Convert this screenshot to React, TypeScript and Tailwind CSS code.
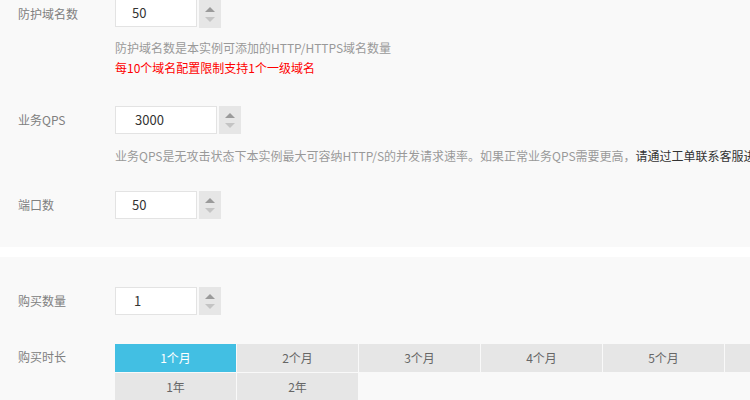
import React from "react";

const font = { fontFamily: '"Noto Sans CJK SC", "Noto Sans", sans-serif' };

function Spinner() {
  return (
    <div className="ml-[2px] flex h-[28px] w-[22px] shrink-0 flex-col items-center justify-center gap-[5px] bg-[#e6e6e6]">
      <div className="h-0 w-0 border-x-[5px] border-b-[5px] border-x-transparent border-b-[#9a9a9a]" />
      <div className="h-0 w-0 border-x-[5px] border-t-[5px] border-x-transparent border-t-[#c4c4c4]" />
    </div>
  );
}

function NumInput({ value, wide, first, pad }: { value: string; wide?: boolean; first?: boolean; pad: string }) {
  return (
    <div className="flex items-start">
      <div
        className={`${wide ? "w-[102px]" : "w-[82px]"} ${first ? "h-[27px] border-t-0" : "h-[28px]"} flex shrink-0 items-center border border-[#e3e3e3] bg-white text-[13px] text-[#333] ${pad}`}
      >
        {value}
      </div>
      <Spinner />
    </div>
  );
}

function Row({ label, children }: { label: string; children: React.ReactNode }) {
  return (
    <div className="flex items-center">
      <div className="w-[115px] shrink-0 pl-[18px] text-[12px] text-[#808080]">{label}</div>
      {children}
    </div>
  );
}

const months = ["1个月", "2个月", "3个月", "4个月", "5个月", "6个月", "7个月", "8个月", "9个月"];
const years = ["1年", "2年"];

export default function App() {
  return (
    <div className="h-[400px] w-[750px] overflow-hidden bg-white" style={font}>
      <div className="h-[247px] bg-[#f9f9f9]">
        <Row label="防护域名数">
          <NumInput value="50" first pad="pl-[16px]" />
        </Row>
        <div className="mt-[10px] pl-[115px] text-[12px] leading-[20px]">
          <div className="text-[#999]">防护域名数是本实例可添加的HTTP/HTTPS域名数量</div>
          <div className="text-[#ff0000]">每10个域名配置限制支持1个一级域名</div>
        </div>
        <div className="mt-[28px]">
          <Row label="业务QPS">
            <NumInput value="3000" wide pad="pl-[19px]" />
          </Row>
        </div>
        <div className="mt-[12px] whitespace-nowrap pl-[115px] text-[12px] leading-[20px] text-[#999]">
          业务QPS是无攻击状态下本实例最大可容纳HTTP/S的并发请求速率。如果正常业务QPS需要更高，
          <span className="text-[#333]">请通过工单联系客服进行调整</span>
        </div>
        <div className="mt-[25px]">
          <Row label="端口数">
            <NumInput value="50" pad="pl-[16px]" />
          </Row>
        </div>
      </div>
      <div className="h-[10px] bg-white" />
      <div className="h-[143px] bg-[#f9f9f9] pt-[30px]">
        <Row label="购买数量">
          <NumInput value="1" pad="pl-[18px]" />
        </Row>
        <div className="mt-[29px] flex items-start">
          <div className="w-[115px] shrink-0 pt-[4px] pl-[18px] text-[12px] text-[#808080]">购买时长</div>
          <div className="flex shrink-0 flex-col gap-[1px]">
            <div className="flex gap-[1px]">
              {months.map((m, i) => (
                <div
                  key={m}
                  className={`flex h-[28px] w-[121px] shrink-0 items-center justify-center text-[12px] ${
                    i === 0 ? "bg-[#42bfe3] text-white" : "bg-[#e6e6e6] text-[#666]"
                  }`}
                >
                  {m}
                </div>
              ))}
            </div>
            <div className="flex gap-[1px]">
              {years.map((y) => (
                <div
                  key={y}
                  className="flex h-[28px] w-[121px] shrink-0 items-center justify-center bg-[#e6e6e6] text-[12px] text-[#666]"
                >
                  {y}
                </div>
              ))}
            </div>
          </div>
        </div>
      </div>
    </div>
  );
}
